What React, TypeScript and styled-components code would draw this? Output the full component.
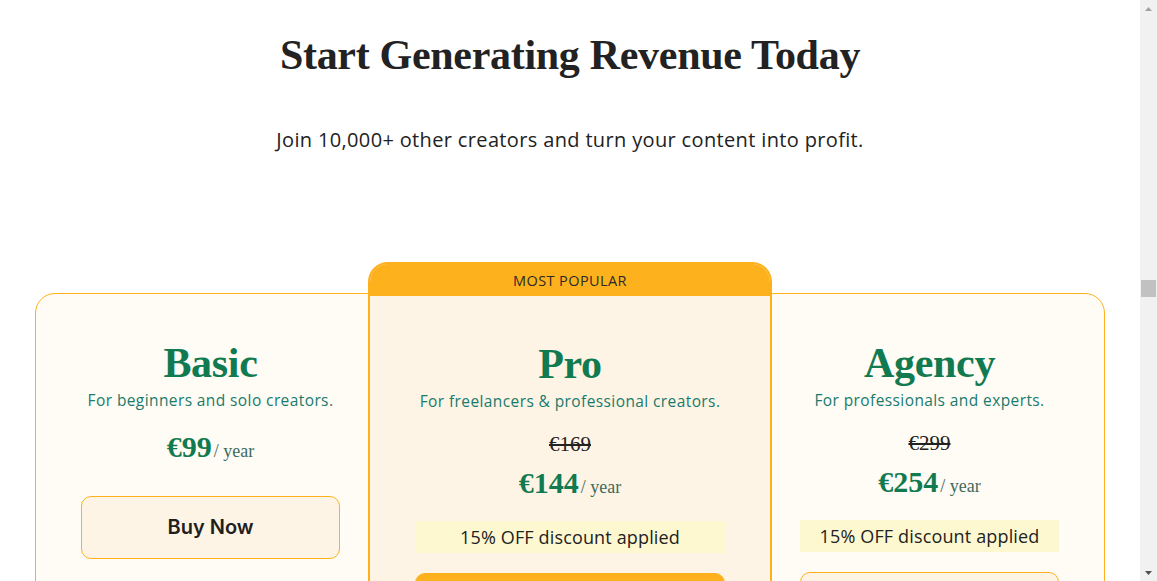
import { createGlobalStyle } from 'styled-components'
import styled from 'styled-components'

const GlobalStyle = createGlobalStyle`
  html, body {
    margin: 0;
    padding: 0;
    background: #ffffff;
  }
  body {
    font-family: 'Open Sans', 'Noto Sans', sans-serif;
    color: #1f1f1f;
  }
`

interface Plan {
  name: string
  tagline: string
  oldPrice?: string
  price: string
  discount?: string
  popular?: boolean
  features: string[]
}

const plans: Plan[] = [
  {
    name: 'Basic',
    tagline: 'For beginners and solo creators.',
    price: '€99',
    features: ['1 website', 'Unlimited paywalls', 'Email support']
  },
  {
    name: 'Pro',
    tagline: 'For freelancers & professional creators.',
    oldPrice: '€169',
    price: '€144',
    discount: '15% OFF discount applied',
    popular: true,
    features: ['5 websites', 'Unlimited paywalls', 'Priority support']
  },
  {
    name: 'Agency',
    tagline: 'For professionals and experts.',
    oldPrice: '€299',
    price: '€254',
    discount: '15% OFF discount applied',
    features: ['25 websites', 'Unlimited paywalls', 'Dedicated support']
  }
]

export default function App() {
  return (
    <>
      <GlobalStyle />
      <Frame>
        <Section>
          <Heading>Start Generating Revenue Today</Heading>
          <Lead>Join 10,000+ other creators and turn your content into profit.</Lead>
          <Cards>
            {plans.map(plan => (
              <Card key={plan.name} $popular={plan.popular}>
                {plan.popular && <Ribbon>MOST POPULAR</Ribbon>}
                <CardBody $popular={plan.popular}>
                  <PlanName>{plan.name}</PlanName>
                  <Tagline>{plan.tagline}</Tagline>
                  {plan.oldPrice && <OldPrice>{plan.oldPrice}</OldPrice>}
                  <Price $solo={!plan.oldPrice}>
                    {plan.price}
                    <Per>/ year</Per>
                  </Price>
                  {plan.discount && <Discount>{plan.discount}</Discount>}
                  <BuyButton $filled={plan.popular} $afterDiscount={!!plan.discount}>
                    Buy Now
                  </BuyButton>
                  <Features>
                    {plan.features.map(f => (
                      <Feature key={f}>{f}</Feature>
                    ))}
                  </Features>
                </CardBody>
              </Card>
            ))}
          </Cards>
        </Section>
        <ScrollRail>
          <Arrow>
            <svg width="7" height="4" viewBox="0 0 7 4">
              <path d="M0 4 L3.5 0 L7 4 Z" fill="#a3a3a3" />
            </svg>
          </Arrow>
          <Track>
            <Thumb />
          </Track>
          <Arrow>
            <svg width="7" height="4" viewBox="0 0 7 4">
              <path d="M0 0 L7 0 L3.5 4 Z" fill="#505050" />
            </svg>
          </Arrow>
        </ScrollRail>
      </Frame>
    </>
  )
}

const Frame = styled.div`
  display: flex;
  align-items: flex-start;
  height: 100vh;
  overflow: hidden;
`

const Section = styled.section`
  flex: 1;
  display: flex;
  flex-direction: column;
  align-items: center;
  padding: 30px 0 0;
`

const ScrollRail = styled.aside`
  width: 17px;
  height: 100vh;
  flex-shrink: 0;
  display: flex;
  flex-direction: column;
  background: #f1f1f1;
`

const Arrow = styled.div`
  height: 17px;
  display: flex;
  align-items: center;
  justify-content: center;
`

const Track = styled.div`
  flex: 1;
  padding-top: 263px;
  display: flex;
  justify-content: center;
`

const Thumb = styled.div`
  width: 15px;
  height: 17px;
  background: #c1c1c1;
`

const Heading = styled.h2`
  margin: 0;
  font-family: 'Liberation Serif', serif;
  font-weight: 700;
  font-size: 42px;
  line-height: 1.2;
  color: #222222;
  letter-spacing: -0.3px;
`

const Lead = styled.p`
  margin: 46px 0 0;
  font-family: 'Open Sans', sans-serif;
  font-size: 20px;
  line-height: 28px;
  letter-spacing: 0.35px;
  color: #222222;
`

const Cards = styled.div`
  display: grid;
  grid-template-columns: 1fr 368px 1fr;
  align-items: start;
  width: 100%;
  max-width: 1070px;
  margin-top: 139px;
`

const Card = styled.div<{ $popular?: boolean }>`
  position: relative;
  display: flex;
  flex-direction: column;
  background: ${({ $popular }) => ($popular ? '#fdf4e6' : '#fffbf5')};
  border: ${({ $popular }) => ($popular ? '2px' : '1px')} solid #fdb21d;
  border-radius: 20px;
  overflow: hidden;
  ${({ $popular }) =>
    $popular &&
    `
    z-index: 1;
    margin: -31px -18px 0;
  `}
`

const Ribbon = styled.div`
  height: 32px;
  display: flex;
  align-items: center;
  justify-content: center;
  background: #fdb21d;
  font-family: 'Open Sans', sans-serif;
  font-size: 14.5px;
  letter-spacing: 0.4px;
  color: #2a2a2a;
`

const CardBody = styled.div<{ $popular?: boolean }>`
  display: flex;
  flex-direction: column;
  align-items: stretch;
  padding: ${({ $popular }) => ($popular ? '43px' : '44px')} 45px 48px;
  text-align: center;
`

const PlanName = styled.h3`
  margin: 0;
  font-family: 'Liberation Serif', serif;
  font-weight: 700;
  font-size: 42px;
  line-height: 1.2;
  color: #117a50;
  letter-spacing: -0.3px;
`

const Tagline = styled.p`
  margin: 0;
  font-family: 'Open Sans', sans-serif;
  font-size: 15.5px;
  line-height: 22px;
  letter-spacing: 0.4px;
  color: #187b6c;
`

const OldPrice = styled.div`
  margin-top: 20px;
  font-family: 'Liberation Serif', serif;
  font-size: 21px;
  line-height: 1.2;
  color: #222222;
  text-decoration: line-through;
`

const Price = styled.div<{ $solo?: boolean }>`
  margin-top: ${({ $solo }) => ($solo ? '18px' : '8px')};
  font-family: 'Liberation Serif', serif;
  font-weight: 700;
  font-size: 30px;
  line-height: 1.2;
  color: #117a50;
`

const Per = styled.span`
  margin-left: 2px;
  font-size: 18px;
  font-weight: 400;
  color: #3e6b5c;
`

const Discount = styled.div`
  margin-top: 20px;
  height: 32px;
  display: flex;
  align-items: center;
  justify-content: center;
  background: #fef8d0;
  font-family: 'Open Sans', sans-serif;
  font-size: 18px;
  letter-spacing: 0.15px;
  color: #222222;
`

const BuyButton = styled.button<{ $filled?: boolean; $afterDiscount?: boolean }>`
  margin-top: ${({ $afterDiscount }) => ($afterDiscount ? '20px' : '31px')};
  height: 63px;
  border: 1px solid #fdb21d;
  border-radius: 10px;
  background: ${({ $filled }) => ($filled ? '#fdb21d' : '#fdf4e6')};
  font-family: 'Inter', sans-serif;
  font-weight: 600;
  font-size: 20px;
  color: #1f1f1f;
  cursor: pointer;
`

const Features = styled.ul`
  list-style: none;
  margin: 32px 0 0;
  padding: 0;
  display: flex;
  flex-direction: column;
  gap: 14px;
  text-align: left;
`

const Feature = styled.li`
  font-family: 'Open Sans', sans-serif;
  font-size: 16px;
  color: #222222;
`
